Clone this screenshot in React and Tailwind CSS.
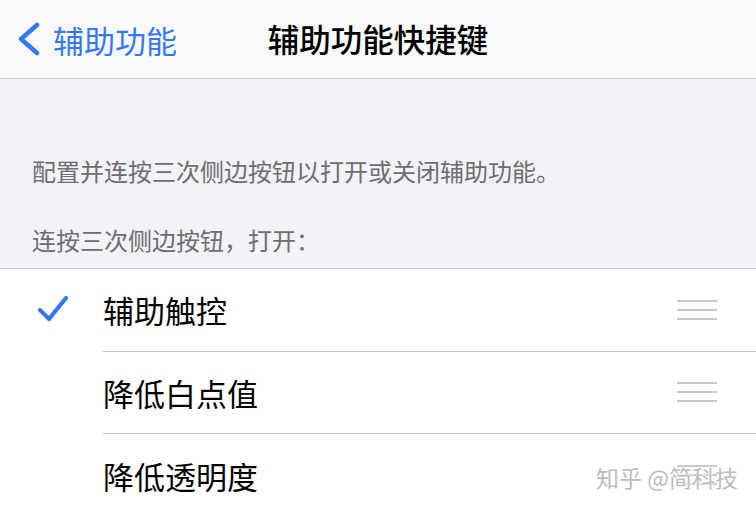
export default function App() {
  const rows = [
    { label: "辅助触控", checked: true, sep: true },
    { label: "降低白点值", checked: false, sep: true },
    { label: "降低透明度", checked: false, sep: false },
  ];
  return (
    <div
      className="relative w-[756px] h-[512px] overflow-hidden bg-white"
      style={{ fontFamily: '"Noto Sans CJK SC", "Noto Sans", sans-serif' }}
    >
      {/* Nav bar */}
      <div className="grid grid-cols-[1fr_auto_1fr] items-center h-[79px] bg-[#f9f9f9] border-b border-[#c8c7cc]">
        <div className="flex items-center pl-[17px] gap-[12px] text-[#3478f6]">
          <svg width="24" height="34" viewBox="0 0 24 34" fill="none">
            <path d="M20 3 L4 17 L20 31" stroke="#3478f6" strokeWidth="4.5" strokeLinecap="round" strokeLinejoin="round" />
          </svg>
          <span className="text-[31px] leading-none">辅助功能</span>
        </div>
        <div className="text-[31.5px] leading-none font-medium text-black">辅助功能快捷键</div>
        <div />
      </div>

      {/* Gray info section */}
      <div className="bg-[#f2f2f7] pl-[32px] pt-[76px] pb-[12px] border-b border-[#c8c7cc] text-[#6d6d72] text-[24px] leading-[32px]">
        <div>配置并连按三次侧边按钮以打开或关闭辅助功能。</div>
        <div className="mt-[37px]">连按三次侧边按钮，打开：</div>
      </div>

      {/* List */}
      <div className="bg-white">
        {rows.map((r) => (
          <div key={r.label} className="flex h-[82.5px]">
            <div className="w-[103px] flex items-center pl-[36px]">
              {r.checked && (
                <svg width="34" height="30" viewBox="0 0 34 30" fill="none">
                  <path d="M4 15 L13 24 L30 3" stroke="#3478f6" strokeWidth="4.2" strokeLinecap="round" strokeLinejoin="round" />
                </svg>
              )}
            </div>
            <div
              className={`flex-1 flex items-center justify-between pr-[39px] ${r.sep ? "border-b border-[#c8c7cc]" : ""}`}
            >
              <span className="text-[31px] leading-none text-black">{r.label}</span>
              <div className="flex flex-col gap-[7px]">
                <div className="w-[40px] h-[2px] bg-[#c7c7cc]" />
                <div className="w-[40px] h-[2px] bg-[#c7c7cc]" />
                <div className="w-[40px] h-[2px] bg-[#c7c7cc]" />
              </div>
            </div>
          </div>
        ))}
      </div>

      {/* Watermark */}
      <div className="absolute left-[596px] top-[462px] text-[23px] leading-[30px] text-[#bdbdbd] [text-shadow:0_0_2px_#fff,0_0_2px_#fff,0_0_3px_#fff]">
        知乎 @简科技
      </div>
    </div>
  );
}
